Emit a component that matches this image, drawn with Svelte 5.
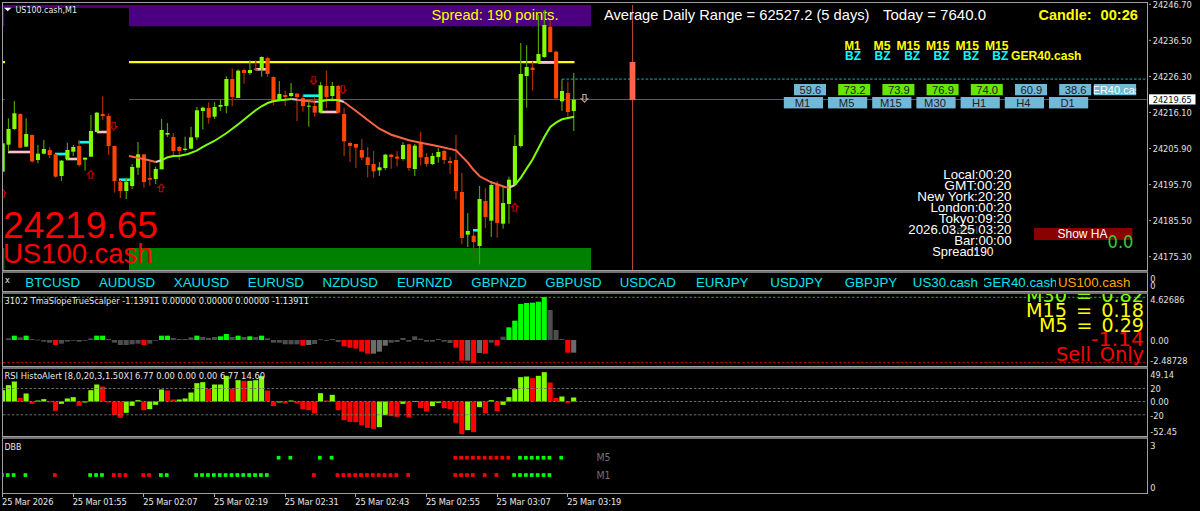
<script lang="ts">
  type Label = {
    x: number;
    y: number;
    w: number;
    text: string;
    size: number;
    fill: string;
    font?: string;
    bold?: boolean;
  };

  const STEP = 5.888;
  const barX = (i: number) => 2.6 + i * STEP;

  // direction, high, low, body top, body bottom (thirds of a pixel)
  const candles: [string, number, number, number, number][] = [
    ["u", 420, 515, 430, 515], ["u", 355, 455, 387, 434], ["u", 303, 390, 340, 387],
    ["d", 340, 445, 342, 443], ["u", 355, 441, 402, 440], ["d", 403, 488, 405, 484],
    ["u", 435, 490, 461, 480], ["u", 420, 463, 447, 461], ["d", 441, 474, 450, 465],
    ["d", 462, 533, 463, 530], ["u", 480, 543, 482, 528], ["u", 428, 480, 450, 478],
    ["u", 435, 468, 441, 455], ["d", 420, 500, 438, 495], ["u", 473, 512, 473, 479],
    ["u", 345, 470, 393, 470], ["u", 336, 397, 338, 396], ["d", 289, 360, 342, 348],
    ["d", 340, 465, 348, 438], ["d", 437, 578, 438, 543], ["d", 540, 594, 545, 573],
    ["u", 533, 597, 545, 573], ["u", 492, 567, 501, 558], ["u", 426, 525, 463, 503],
    ["d", 463, 563, 463, 546], ["d", 485, 557, 534, 539], ["u", 500, 552, 507, 537],
    ["u", 357, 508, 390, 508], ["u", 369, 411, 399, 404], ["d", 399, 466, 411, 453],
    ["d", 438, 480, 441, 453], ["u", 410, 455, 446, 450], ["u", 380, 447, 412, 446],
    ["u", 321, 420, 331, 412], ["u", 320, 388, 323, 333], ["d", 307, 371, 324, 353],
    ["u", 306, 357, 321, 350], ["u", 299, 333, 315, 320], ["u", 229, 340, 237, 318],
    ["d", 205, 318, 237, 291], ["u", 208, 294, 212, 294], ["d", 205, 251, 210, 219],
    ["u", 181, 225, 210, 219], ["d", 181, 213, 206, 210], ["u", 169, 230, 171, 206],
    ["d", 171, 231, 174, 222], ["d", 229, 315, 231, 306], ["u", 243, 303, 282, 300],
    ["d", 272, 318, 285, 291], ["u", 249, 292, 279, 288], ["d", 279, 363, 281, 291],
    ["d", 285, 335, 294, 318], ["u", 306, 380, 317, 320], ["d", 290, 350, 318, 338],
    ["u", 246, 339, 256, 338], ["d", 212, 324, 258, 291], ["u", 246, 297, 258, 288],
    ["d", 255, 339, 258, 338], ["d", 323, 468, 342, 424], ["d", 425, 486, 429, 438],
    ["d", 432, 504, 432, 443], ["d", 417, 480, 450, 473], ["d", 441, 532, 472, 495],
    ["d", 453, 533, 492, 514], ["u", 486, 528, 502, 511], ["u", 462, 510, 464, 504],
    ["d", 461, 506, 464, 471], ["d", 453, 500, 470, 476], ["u", 426, 482, 435, 477],
    ["d", 431, 512, 433, 504], ["u", 432, 528, 437, 507], ["d", 395, 497, 429, 472],
    ["d", 459, 500, 471, 492], ["u", 459, 495, 468, 492], ["u", 444, 488, 456, 471],
    ["d", 450, 492, 453, 480], ["d", 470, 522, 483, 489], ["d", 405, 598, 480, 573],
    ["d", 519, 733, 576, 714], ["u", 639, 741, 693, 704], ["d", 696, 771, 707, 726],
    ["u", 558, 793, 597, 738], ["d", 564, 684, 603, 651], ["u", 543, 711, 555, 662],
    ["d", 543, 713, 555, 669], ["u", 561, 686, 609, 671], ["u", 530, 671, 539, 612],
    ["u", 405, 558, 438, 554], ["u", 129, 443, 222, 438], ["u", 136, 323, 201, 228],
    ["d", 185, 272, 203, 210], ["u", 45, 190, 162, 189], ["u", 30, 174, 75, 171],
    ["d", 60, 158, 80, 156], ["d", 153, 297, 155, 295], ["u", 237, 333, 273, 304],
    ["d", 245, 350, 279, 336], ["u", 219, 393, 299, 333],
  ];

  // histogram bars: colour key followed by a signed height (thirds of a pixel)
  const parseBars = (s: string) =>
    s.trim().split(/\s+/).map((b) => ({ c: b[0], h: Number(b.slice(1)) / 3 }));

  const slope = parseBars(`
    n0 n5 g13 n8 g13 n3 n1 n-5 n-8 r-15 n-11 n-5 n-2 n-5 n-2 n5 g13 g13 n3 n-8
    n-15 n-15 n-13 n-11 r-15 n-11 n-2 g13 g13 n6 n3 n3 n8 g13 n9 n6 n9 g11 g18 n9
    g13 n9 g11 n9 g13 n5 n-8 n-8 n-13 n-13 n-13 r-17 m-15 n-12 n2 n-1 n3 n-6 r-19 r-23
    r-26 r-35 r-41 m-41 m-35 m-17 n-8 n-6 n6 n-5 n11 n4 n-5 n-5 n3 n-5 n-9 r-23 r-62 m-62
    r-69 m-39 r-41 n-8 r-17 n10 g38 g58 g108 g111 g112 g115 g129 n90 n30 n3 r-38 m-38`);

  const rsi = parseBars(`
    l34 l49 l60 r11 l24 r-7 l3 l7 r-1 r-28 l-7 l9 l13 r-13 l-3 l34 l51 r45 r-3 r-40
    r-49 l-34 l-13 l4 r-26 l-23 l-10 l36 r33 r6 l6 l9 l27 l55 l58 r38 l51 l51 l77 r39
    l64 r62 l62 l64 l76 r33 r-14 l-3 r-6 l3 r-6 r-23 r-26 r-36 l25 r3 l20 r-26 r-56 r-61
    r-62 r-71 r-79 r-82 l-77 l-41 r-44 r-46 l-7 r-48 l1 r-20 r-30 l-14 l-4 r-20 r-23 r-64 r-98 l-86
    r-92 l-17 r-35 l4 r-29 l-10 l13 l37 l73 l75 r70 l77 l88 r57 r11 l15 r-4 l12`);

  const colors: Record<string, string> = {
    n: "#4d4d4d",
    m: "#6b6b6b",
    g: "#00ff00",
    r: "#ff0000",
    l: "#7fff00",
  };

  const range = (a: number, b: number) => Array.from({ length: b - a + 1 }, (_, k) => a + k);

  const dots = [
    { y: 457.7, c: "#00ff00", bars: [47, 49, 54, 56, ...range(88, 93), 95] },
    { y: 457.7, c: "#ff0000", bars: range(77, 86) },
    { y: 475, c: "#00ff00", bars: [0, 1, 2, 4, 15, 16, 17, 27, 28, ...range(33, 45), ...range(87, 93)] },
    { y: 475, c: "#ff0000", bars: [9, 19, 20, 21, 24, 25, 53, ...range(57, 67), 69, ...range(77, 80), 82, 84] },
  ];

  const TOMATO = "#ff6347";
  const LAWN = "#7fff00";
  const average = [
    { c: TOMATO, p: "129,156 135,157.3 145,159.3 155.7,162" },
    { c: "#d3d3d3", p: "155.7,162 161.3,160.3" },
    { c: LAWN, p: "161.3,160.3 167,157.5 173.3,156 180,155.7 188,154 196.7,150.7 203.3,146.7 214.3,141 226.3,133.3 238.3,124.3 250,114.7 256,110 262,106 267.7,103 273.3,101.3 280,100.3 291.7,99" },
    { c: "#d3d3d3", p: "291.7,99 297,99.7" },
    { c: TOMATO, p: "297,99.7 305,100.7 315,101.7" },
    { c: "#d3d3d3", p: "315,101.7 318.3,101.7" },
    { c: LAWN, p: "318.3,101.7 326,100.3 332.3,99.7 339,100.2" },
    { c: "#d3d3d3", p: "339,100.2 344,102" },
    { c: TOMATO, p: "344,102 360,114 366.7,119.3 379.3,128.7 391.3,134.7 409,140.3 420.7,142.7 438.3,146.3 456,150.3 467.7,162.3 473.7,170 479.7,176.3 491.3,182.3 505.7,187.3 509,187.5" },
    { c: "#d3d3d3", p: "509,187.5 515,185" },
    { c: LAWN, p: "515,185 521,177.3 532.7,159.3 544.3,137 550.3,127 556,122.7 562,119.3 568,118 574,116.7" },
  ];

  // x1, x2, y, colour
  const levels: [number, number, number, string][] = [
    [8, 31, 152, "pink"], [66, 77, 159, "pink"], [97, 108, 132, "pink"],
    [256, 267, 69.3, "pink"], [320, 338, 112, "pink"], [538, 555, 62.5, "pink"],
    [55, 66, 154, "cyan"], [78.5, 89, 142.2, "cyan"], [119, 131, 179.7, "cyan"],
    [303, 319, 95.7, "cyan"], [473, 478, 230.3, "cyan"],
  ];

  const arrows = [
    { x: 90.7, y: 174.5, up: true, c: "#c00000" },
    { x: 161.3, y: 188, up: true, c: "#c00000" },
    { x: 2.8, y: 193.5, up: true, c: "#c00000" },
    { x: 514.8, y: 207.3, up: true, c: "#c00000" },
    { x: 113.7, y: 126, up: false, c: "#c00000" },
    { x: 313.6, y: 80.5, up: false, c: "#c00000" },
    { x: 343, y: 89.5, up: false, c: "#c00000" },
    { x: 584.5, y: 98.2, up: false, c: "#c8a090" },
  ];

  const title: Label = { x: 15.5, y: 12.7, w: 61.5, text: "US100.cash,M1", size: 9.5, fill: "#e8e8e8", font: "ui" };

  const headings: Label[] = [
    { x: 431.5, y: 20, w: 127, text: "Spread: 190 points.", size: 14.8, fill: "#ffff00" },
    { x: 604, y: 20, w: 265.5, text: "Average Daily Range = 62527.2 (5 days)", size: 14.8, fill: "#fff" },
    { x: 883, y: 20, w: 103, text: "Today = 7640.0", size: 14.8, fill: "#fff" },
    { x: 1038.5, y: 20, w: 53, text: "Candle:", size: 14.8, fill: "#ffff00", bold: true },
    { x: 1100.5, y: 20, w: 37.5, text: "00:26", size: 14.8, fill: "#ffff00", bold: true },
    { x: 3, y: 238, w: 155, text: "24219.65", size: 37.5, fill: "#ff0000" },
    { x: 3, y: 263, w: 149.5, text: "US100.cash", size: 27, fill: "#ff0000" },
    { x: 1011, y: 60.4, w: 70.5, text: "GER40.cash", size: 12.4, fill: "#ffff00", bold: true },
    { x: 1107.5, y: 247.6, w: 26, text: "0.0", size: 17, fill: "#32cd32", font: "wide" },
  ];

  const zones: Label[] = [
    [844.5, 16, "M1"], [873.5, 17, "M5"], [896.5, 23.5, "M15"],
    [926, 23.5, "M15"], [955.5, 23.5, "M15"], [985, 23.5, "M15"],
  ].map(([x, w, text]) => ({ x, y: 50, w, text, size: 12.4, fill: "#ffff00", bold: true }) as Label);

  const signals: Label[] = [845, 874.6, 904.2, 933.5, 963, 992.3].map((x) => ({
    x, y: 60.4, w: 16, text: "BZ", size: 12.4, fill: "#00ffff", bold: true,
  }));

  const strengths = [
    { v: "59.6", tf: "M1" },
    { v: "73.2", tf: "M5" },
    { v: "73.9", tf: "M15" },
    { v: "76.9", tf: "M30" },
    { v: "74.0", tf: "H1" },
    { v: "60.9", tf: "H4" },
    { v: "38.6", tf: "D1" },
  ];

  const clocks: Label[] = [
    [943.3, "Local:00:20"], [944.3, "GMT:00:20"], [917.3, "New York:20:20"],
    [930.5, "London:00:20"], [938.7, "Tokyo:09:20"], [908.3, "2026.03.25 03:20"],
    [954.2, "Bar:00:00"],
  ].map(([x, text], i) => ({ x, y: 178.8 + i * 11, w: 1011.5 - Number(x), text, size: 13, fill: "#fff" }) as Label);

  const spread: Label[] = [
    { x: 950, y: 233.7, w: 28, text: "Label", size: 11.5, fill: "#555" },
    { x: 932.3, y: 255.9, w: 45, text: "Spread:", size: 13, fill: "#fff" },
    { x: 973.5, y: 255.9, w: 20, text: "190", size: 13, fill: "#fff" },
  ];

  const slopeLabels: Label[] = [
    { x: 4.5, y: 304, w: 304.5, text: "310.2 TmaSlopeTrueScalper -1.13911 0.00000 0.00000 0.00000 -1.13911", size: 9.5, fill: "#e8e8e8", font: "ui" },
    { x: 1026, y: 302, w: 118, text: "M30 = 0.82", size: 20.3, fill: "#7fff00", font: "wide" },
    { x: 1026, y: 317, w: 118, text: "M15 = 0.18", size: 20.3, fill: "#ffff00", font: "wide" },
    { x: 1039, y: 331.5, w: 105, text: "M5 = 0.29", size: 20.3, fill: "#ffff00", font: "wide" },
    { x: 1091, y: 346.2, w: 53, text: "-1.14", size: 20.3, fill: "#ff0000", font: "wide" },
    { x: 1056, y: 361, w: 88, text: "Sell Only", size: 20.3, fill: "#ff0000", font: "wide" },
  ];

  const rsiLabel: Label = { x: 4.5, y: 379.2, w: 260.5, text: "RSI HistoAlert [8,0,20,3,1.50X] 6.77 0.00 0.00 0.00 6.77 14.60", size: 9.5, fill: "#e8e8e8", font: "ui" };

  const dbbLabels: Label[] = [
    { x: 4.5, y: 450, w: 17, text: "DBB", size: 9.5, fill: "#e8e8e8", font: "ui" },
    { x: 596.5, y: 461, w: 14, text: "M5", size: 10, fill: "#747474", font: "ui" },
    { x: 596.5, y: 478.7, w: 14, text: "M1", size: 10, fill: "#747474", font: "ui" },
  ];

  const symbols = [
    "BTCUSD", "AUDUSD", "XAUUSD", "EURUSD", "NZDUSD", "EURNZD", "GBPNZD", "GBPUSD",
    "USDCAD", "EURJPY", "USDJPY", "GBPJPY", "US30.cash", "GER40.cash", "US100.cash",
  ];

  const prices = [
    "24246.70", "24236.50", "24226.30", "24216.10", "24205.90", "24195.70", "24185.50", "24175.30",
  ];

  const times = [
    "25 Mar 2026", "25 Mar 01:55", "25 Mar 02:07", "25 Mar 02:19", "25 Mar 02:31",
    "25 Mar 02:43", "25 Mar 02:55", "25 Mar 03:07", "25 Mar 03:19",
  ];

  const slopeScale: [string, number][] = [["4.62686", 299.3], ["0.00", 340.7], ["-2.48728", 360.5]];
  const rsiScale: [string, number][] = [["49.14", 374.7], ["20", 388.6], ["0.00", 401.8], ["-20", 415.2], ["-52.45", 431.3]];
  const dbbScale: [string, number][] = [["3", 445.3], ["0", 487.8]];
</script>

{#snippet label(l: Label)}
  <text
    class={l.font ?? "sans"}
    class:bold={l.bold}
    x={l.x}
    y={l.y}
    fill={l.fill}
    font-size={l.size}
    textLength={l.w}
    lengthAdjust="spacingAndGlyphs">{l.text}</text>
{/snippet}

{#snippet histogram(bars: { c: string; h: number }[], base: number)}
  {#each bars as b, i}
    {#if b.h !== 0}
      <rect
        x={barX(i) - 2.6}
        y={b.h > 0 ? base - b.h : base}
        width="5.1"
        height={Math.max(Math.abs(b.h), 0.8)}
        fill={colors[b.c]}
      />
    {/if}
  {/each}
{/snippet}

{#snippet scale(rows: [string, number][], top: number, height: number)}
  <svg class="scale" viewBox="1149 {top} 51 {height}" width="51" {height}>
    {#each rows as [text, y]}
      <text class="ui" x="1150.3" y={y + 3.4} fill="#e0e0e0" font-size="9.2">{text}</text>
    {/each}
  </svg>
{/snippet}

<main class="terminal">
  <section class="panel price">
    <svg class="plot" viewBox="3 3 1144 267" width="1144" height="267">
      <rect x="0" y="5" width="129" height="3" fill="#4b0082" />
      <rect x="0" y="5" width="4.3" height="21.3" fill="#4b0082" />
      <rect x="129" y="5" width="462" height="21.3" fill="#4b0082" />
      <rect x="0" y="248" width="4.3" height="24" fill="#008000" />
      <rect x="129" y="248" width="462" height="24" fill="#008000" />
      <path d="M0 99.5H4.5M129 99.5H1150" stroke="#565b68" stroke-width="1" />
      <path d="M0 62.2H5M129 62.2H574.5" stroke="#ffff00" stroke-width="2.2" />
      <path d="M562 79.2H1150" stroke="#0f9090" stroke-width="1.2" stroke-dasharray="2.6 1.8" />

      {@render label(headings[0])}

      {#each levels as [x1, x2, y, c]}
        <line {x1} {x2} y1={y} y2={y} stroke={c} stroke-width="2.6" />
      {/each}

      {#each candles as [dir, hi, lo, top, bottom], i}
        <rect x={barX(i) - 0.6} y={hi / 3} width="1.2" height={(lo - hi) / 3} fill={dir === "u" ? "#4f9e00" : "#a83000"} />
        <rect x={barX(i) - 2} y={top / 3} width="4.1" height={(bottom - top) / 3} fill={dir === "u" ? "#7fff00" : "#ff4500"} />
      {/each}

      {#each average as seg}
        <polyline points={seg.p} fill="none" stroke={seg.c} stroke-width="2" />
      {/each}

      {#each arrows as a}
        <path
          transform="translate({a.x} {a.y}) scale(1 {a.up ? 1 : -1})"
          d="M0 -4L3.2 -0.6H1.6V3.7H-1.6V-0.6H-3.2Z"
          fill="none"
          stroke={a.c}
          stroke-width="1.1"
        />
      {/each}

      <rect x="632" y="5" width="1.1" height="266" fill="#b04430" />
      <rect x="629.6" y="62" width="5.8" height="38" fill={TOMATO} />

      <path d="M4 7.8H11.5L7.7 11.3Z" fill="#fff" />
      {@render label(title)}
      {#each headings.slice(1, 8) as l}{@render label(l)}{/each}
      {#each zones as l}{@render label(l)}{/each}
      {#each signals as l}{@render label(l)}{/each}

      {#each strengths as s, i}
        <rect x={794 + i * 44.2} y="84" width="32" height="11.3" fill={Number(s.v) > 70 ? "#66e600" : "#72b9d8"} />
        <text class="sans" x={810.4 + i * 44.2} y="93.6" text-anchor="middle" font-size="11.2" fill="#222">{s.v}</text>
        <rect x={783.8 + i * 44.2} y="97" width="39.2" height="11.4" fill="#72b9d8" />
        <text class="sans" x={802.4 + i * 44.2} y="106.7" text-anchor="middle" font-size="11.2" fill="#222">{s.tf}</text>
      {/each}
      <svg x="1093.6" y="84" width="42.6" height="11.3">
        <rect width="43" height="12" fill="#72b9d8" />
        <text class="sans" x="21.6" y="9.6" text-anchor="middle" font-size="11" fill="#fff">GER40.cash</text>
      </svg>

      {#each spread as l}{@render label(l)}{/each}
      {#each clocks as l}{@render label(l)}{/each}

      <rect x="1034" y="228" width="98.3" height="12" fill="#8b0000" />
      {@render label({ x: 1057.5, y: 237.6, w: 50, text: "Show HA", size: 12.4, fill: "#fff" })}
      {@render label(headings[8])}
    </svg>
    <svg class="scale" viewBox="1149 2 51 269" width="51" height="269">
      {#each prices as p, i}
        <path d="M1149 {4.3 + i * 36.05}h2" stroke="#aaa" />
        <text class="ui" x="1152.7" y={7.7 + i * 36.05} fill="#e0e0e0" font-size="9.2" textLength="39">{p}</text>
      {/each}
      <rect x="1149" y="94.3" width="46.5" height="10.2" fill="#fff" />
      <text class="ui" x="1152.7" y="102.8" fill="#111" font-size="9.2" textLength="39">24219.65</text>
    </svg>
  </section>

  <section class="panel pairs">
    <div class="plot symbols">
      <span class="close">x</span>
      {#each symbols as s, i}
        <button type="button" class:active={i === symbols.length - 1}><span>{s}</span></button>
      {/each}
    </div>
    {@render scale([["0", 279], ["0", 285.5]], 271, 21)}
  </section>

  <section class="panel slope">
    <svg class="plot" viewBox="3 294 1144 72" width="1144" height="72">
      <path d="M3 297.3H1148" stroke="#00a000" stroke-width="1.3" stroke-dasharray="2.4 2" />
      <path d="M3 362.4H1148" stroke="#c00000" stroke-dasharray="2.6 1.8" />
      {@render histogram(slope, 340)}
      {#each slopeLabels as l}{@render label(l)}{/each}
    </svg>
    {@render scale(slopeScale, 292, 75)}
  </section>

  <section class="panel rsi">
    <svg class="plot" viewBox="3 369 1144 67" width="1144" height="67">
      {@render histogram(rsi, 401.5)}
      {#each [388.5, 401.5, 414.8] as y}
        <path d="M3 {y}H1148" stroke="#777" stroke-width="0.9" stroke-dasharray="2.6 1.8" />
      {/each}
      {@render label(rsiLabel)}
    </svg>
    {@render scale(rsiScale, 367, 70)}
  </section>

  <section class="panel dbb">
    <svg class="plot" viewBox="3 439 1144 54" width="1144" height="54">
      {#each dots as row}
        {#each row.bars as i}
          <rect x={barX(i) - 2.6} y={row.y - 1.8} width="3.7" height="3.7" fill={row.c} />
        {/each}
      {/each}
      {#each dbbLabels as l}{@render label(l)}{/each}
    </svg>
    {@render scale(dbbScale, 437, 57)}
  </section>

  <footer class="times">
    {#each times as t}
      <span>{t}</span>
    {/each}
  </footer>
</main>

<style>
  :global(body) {
    background: #000;
  }

  .terminal {
    display: flex;
    flex-direction: column;
    width: 1200px;
    height: 511px;
    box-sizing: border-box;
    padding: 2px 0 0 2px;
    overflow: hidden;
    background: #000;
    font-family: "Liberation Sans", Arial, sans-serif;
  }

  .panel {
    display: flex;
    flex: none;
  }

  .plot {
    display: block;
    flex: none;
    width: 1144px;
    overflow: hidden;
    border: 1px solid #a0a0a0;
    border-top: 2px solid #707070;
  }

  .scale {
    display: block;
    flex: none;
    margin-left: 1px;
    overflow: visible;
  }

  .price {
    height: 269px;
  }

  .price .plot {
    border-top: 1px solid #a0a0a0;
  }

  .pairs {
    height: 21px;
  }

  .slope {
    height: 75px;
  }

  .rsi {
    height: 70px;
  }

  .dbb {
    height: 57px;
  }

  .sans {
    font-family: "Liberation Sans", Arial, sans-serif;
  }

  .ui {
    font-family: "DejaVu Sans Condensed", Tahoma, sans-serif;
  }

  .wide {
    font-family: "DejaVu Sans", Verdana, sans-serif;
    word-spacing: 3px;
  }

  .bold {
    font-weight: 700;
  }

  text {
    white-space: pre;
  }

  .symbols {
    display: flex;
    align-items: center;
  }

  .close {
    width: 12.5px;
    padding: 0 0 4px 2px;
    box-sizing: border-box;
    font: 9px "DejaVu Sans Condensed", sans-serif;
    color: #e8e8e8;
  }

  .symbols button {
    display: flex;
    justify-content: center;
    flex: none;
    width: 72.4px;
    margin: 0 1px;
    padding: 1px 0 0;
    border: none;
    background: none;
    overflow: hidden;
    color: #00e5ee;
    font: 13.3px/16px "Liberation Sans", Arial, sans-serif;
  }

  .symbols button.active {
    color: #ffa500;
  }

  .times {
    display: flex;
    flex: none;
    height: 17px;
    font: 9.2px/16px "DejaVu Sans Condensed", Tahoma, sans-serif;
    letter-spacing: -0.1px;
    color: #e8e8e8;
  }

  .times span {
    flex: none;
    width: 70.66px;
    white-space: nowrap;
    background: linear-gradient(#aaa, #aaa) 0 0 / 1px 3px no-repeat;
  }
</style>
